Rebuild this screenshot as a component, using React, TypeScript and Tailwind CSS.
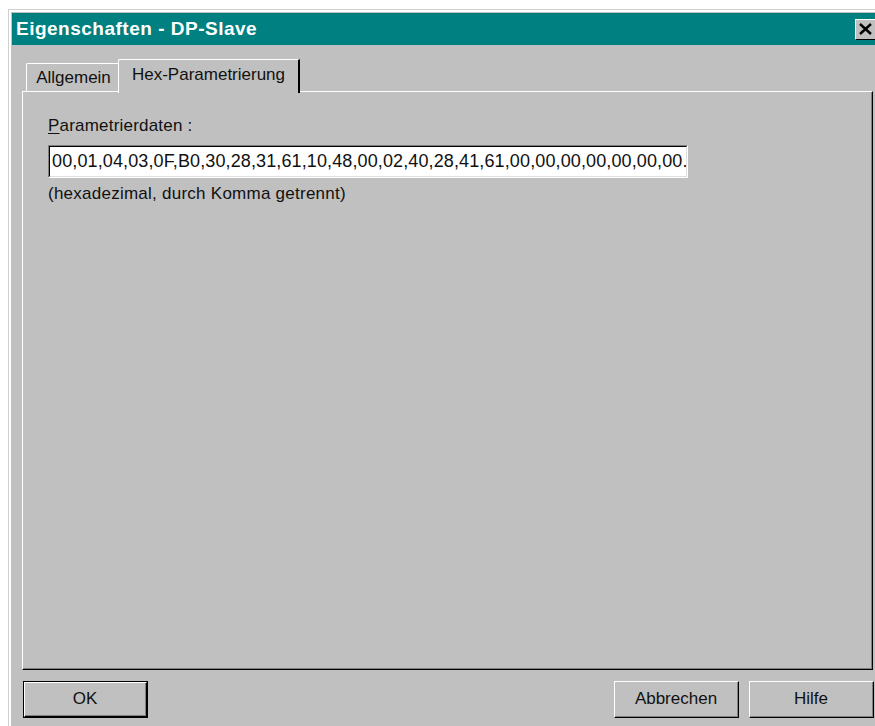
import React from "react";

const hexData =
  "00,01,04,03,0F,B0,30,28,31,61,10,48,00,02,40,28,41,61,00,00,00,00,00,00,00.";

function Win95Button({ label, isDefault }: { label: string; isDefault?: boolean }) {
  // classic raised bevel; the default button gets an extra black frame
  const bevel = (
    <div className="flex-1 flex border-t border-l border-white border-r border-b border-r-black border-b-black">
      <div className="flex-1 flex items-center justify-center border-r border-b border-[#808080] text-[17px] text-[#111]">
        {label}
      </div>
    </div>
  );
  return (
    <button className="w-[125px] h-[37px] flex p-0 bg-[#c0c0c0]">
      {isDefault ? <div className="flex-1 flex border border-black">{bevel}</div> : bevel}
    </button>
  );
}

export default function App() {
  return (
    <div
      className="w-[875px] h-[726px] overflow-hidden bg-white"
      style={{ fontFamily: '"Liberation Sans", Arial, sans-serif' }}
    >
      <div className="ml-[8px] mt-[9px] w-[890px] h-[740px] border-l border-t border-[#d0d0d0]">
        <div className="h-full border-l-[2px] border-t-[2px] border-white bg-[#c0c0c0] pl-[1px] pt-[1px] flex flex-col">
          {/* title bar */}
          <div className="h-[32px] bg-[#008080] flex items-center pl-[4px] w-[876px]">
            <span className="text-white font-bold text-[19px] tracking-[0.5px] flex-1">
              Eigenschaften - DP-Slave
            </span>
            <div className="w-[30px] h-[21px] mr-[3px] bg-[#c0c0c0] border-t border-l border-white border-r border-b border-r-black border-b-black flex items-center pl-[3px]">
              <svg width="13" height="12" viewBox="0 0 13 12">
                <path d="M1 1 L12 11 M12 1 L1 11" stroke="black" strokeWidth="2.4" />
              </svg>
            </div>
          </div>

          <div className="pl-[10px] flex flex-col">
            {/* tabs */}
            <div className="mt-[14px] h-[32px] flex items-end pl-[4px]">
              <div className="h-[28px] w-[94px] border-t border-l border-white rounded-tl-[2px] flex items-center justify-center text-[17px] text-[#111] pt-[1px]">
                Allgemein
              </div>
              <div className="relative z-10 -ml-[2px] -mb-[2px] h-[34px] w-[182px] bg-[#c0c0c0] border-t border-l border-white border-r-2 border-r-black rounded-tl-[2px] flex items-start justify-center pt-[2px] text-[17px] text-[#111]">
                Hex-Parametrierung
              </div>
            </div>

            {/* tab panel */}
            <div className="w-[851px] h-[579px] flex border-t border-l border-white border-r border-b border-r-black border-b-black">
              <div className="flex-1 border-r border-b border-[#808080] pl-[25px] pt-[24px] flex flex-col">
                <div className="text-[17px] text-[#111] leading-[20px] tracking-[0.2px]">
                  <span className="underline underline-offset-[2px]">P</span>arametrierdaten :
                </div>
                <div className="mt-[9px] w-[640px] h-[33px] flex border-t border-l border-[#808080] border-r border-b border-r-white border-b-white">
                  <div className="flex-1 flex items-center bg-white border-t border-l border-black border-r border-b border-r-[#dfdfdf] border-b-[#dfdfdf] pl-[2px] overflow-hidden whitespace-nowrap text-[18px] tracking-[0.12px] text-[#111]">
                    {hexData}
                  </div>
                </div>
                <div className="mt-[5px] text-[17px] leading-[22px] tracking-[0.25px] text-[#111]">
                  (hexadezimal, durch Komma getrennt)
                </div>
              </div>
            </div>

            {/* dialog buttons */}
            <div className="mt-[11px] w-[852px] flex items-start">
              <div className="ml-[1px]">
                <Win95Button label="OK" isDefault />
              </div>
              <div className="flex-1" />
              <Win95Button label="Abbrechen" />
              <div className="w-[10px]" />
              <Win95Button label="Hilfe" />
            </div>
          </div>
        </div>
      </div>
    </div>
  );
}
